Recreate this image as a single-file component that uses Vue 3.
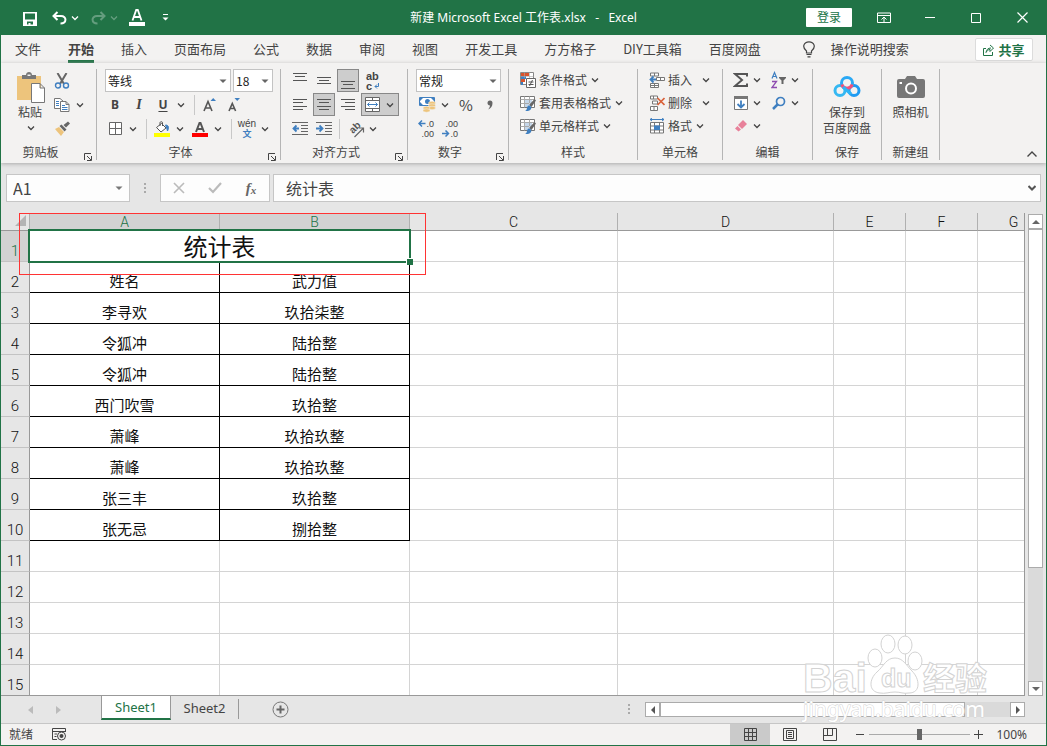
<script setup>
import { ref } from 'vue'

const tabs = ['文件', '开始', '插入', '页面布局', '公式', '数据', '审阅', '视图', '开发工具', '方方格子', 'DIY工具箱', '百度网盘']
const activeTab = ref('开始')

const columns = [
  { name: 'A', width: 190 },
  { name: 'B', width: 190 },
  { name: 'C', width: 208 },
  { name: 'D', width: 216 },
  { name: 'E', width: 72 },
  { name: 'F', width: 72 },
  { name: 'G', width: 72 },
]
const records = [
  ['姓名', '武力值'],
  ['李寻欢', '玖拾柒整'],
  ['令狐冲', '陆拾整'],
  ['令狐冲', '陆拾整'],
  ['西门吹雪', '玖拾整'],
  ['萧峰', '玖拾玖整'],
  ['萧峰', '玖拾玖整'],
  ['张三丰', '玖拾整'],
  ['张无忌', '捌拾整'],
]
const rows = Array.from({ length: 14 }, (_, i) => ({ number: i + 2, cells: records[i] || ['', ''], filled: i < records.length }))

const formula = ref('统计表')
const cellName = ref('A1')
const zoom = ref(100)
</script>

<template>
  <div class="window">
    <svg class="defs" aria-hidden="true">
      <symbol id="caret" viewBox="0 0 10 10"><path d="M2 3.5 5 6.5 8 3.5" fill="none" stroke="currentColor" stroke-width="1.3" /></symbol>
      <symbol id="drop" viewBox="0 0 10 10"><path d="M1.500 3.500H8.500L5 7Z" fill="currentColor" /></symbol>
      <symbol id="launch" viewBox="0 0 10 10"><path d="M1.5 8V1.5H8M4 4 8 8M8.5 4V8.5H4" fill="none" stroke="currentColor" /></symbol>
      <symbol id="sheetbrush" viewBox="0 0 16 16">
        <path d="M.5 1.5H14.500V12.5H.5Z" fill="#fff" stroke="#777" />
        <path d="M4 5H12V9H9V12H4Z" fill="#c5d7ea" />
        <path d="M.5 4.500H14.500M.5 8.500H9M4.500 1.500V12.500M9.500 1.500V8" fill="none" stroke="#aaa" />
        <path d="M14.500 4 16 5.500 11.500 12 9 10Z" fill="#666" /><path d="M5 16C8 15 6 11 9 10.500 13 11 12 17 5 16Z" fill="#3f7fc0" />
      </symbol>
    </svg>

    <header class="titlebar">
      <div class="quick">
        <button class="q save" aria-label="保存">
          <svg width="15" height="15" viewBox="0 0 15 15"><path d="M0 0H14V14H0ZM2 1.500V7.500H12V1.500ZM4 9.500V12.500H5.500V11H7.500V12.500H10V9.500Z" fill="#fff" fill-rule="evenodd" /></svg>
        </button>
        <button class="q undo" aria-label="撤消">
          <svg width="15" height="14" viewBox="0 0 15 14"><path d="M5.500 1 1.500 5 5.500 9M2 5H9C15 5 15 12.500 8.500 12.500" fill="none" stroke="#fff" stroke-width="2" /></svg>
          <svg class="caret"><use href="#caret" /></svg>
        </button>
        <button class="q redo" aria-label="恢复">
          <svg width="15" height="14" viewBox="0 0 15 14"><path d="M9.500 1 13.500 5 9.500 9M13 5H6C0 5 0 12.500 6.500 12.500" fill="none" stroke="#fff" stroke-width="2" /></svg>
          <svg class="caret"><use href="#caret" /></svg>
        </button>
        <button class="q color" aria-label="字体颜色">
          <svg width="16" height="17" viewBox="0 0 16 17"><path d="M3.500 11.500 7.200 1H8.800L12.500 11.500M5 8H11" fill="none" stroke="#fff" stroke-width="1.800" /><path d="M0 13H16V17H0Z" fill="#fff" /></svg>
        </button>
        <button class="q more" aria-label="自定义快速访问工具栏">
          <svg width="8" height="8" viewBox="0 0 8 8"><path d="M2 0H7V1H2ZM1.500 3.500H7.500L4.500 6.500Z" fill="#fff" /></svg>
        </button>
      </div>
      <h1>新建 Microsoft Excel 工作表.xlsx&nbsp;&nbsp; -&nbsp;&nbsp; Excel</h1>
      <div class="controls">
        <button class="login">登录</button>
        <button class="win" aria-label="功能区显示选项"><svg width="14" height="12" viewBox="0 0 14 12"><path d="M.500 1H13.500V10.500H.500ZM.500 3.500H13.500M7 10V5.500M4.500 7.500 7 5 9.500 7.500" fill="none" stroke="#fff" /></svg></button>
        <button class="win" aria-label="最小化"><svg width="10" height="10" viewBox="0 0 10 10"><path d="M0 4.500H10" stroke="#fff" /></svg></button>
        <button class="win" aria-label="最大化"><svg width="10" height="10" viewBox="0 0 10 10"><path d="M.500.500H9.500V9.500H.500Z" fill="none" stroke="#fff" /></svg></button>
        <button class="win" aria-label="关闭"><svg width="11" height="11" viewBox="0 0 11 11"><path d="M.500.500 10.500 10.500M10.500.500.500 10.500" stroke="#fff" stroke-width="1.200" /></svg></button>
      </div>
    </header>

    <nav class="tabs">
      <button v-for="t in tabs" :key="t" class="tab" :class="{ on: t === activeTab }" @click="activeTab = t">{{ t }}</button>
      <button class="tell">
        <svg width="12" height="17" viewBox="0 0 12 17"><path d="M3.500 12V10C-1.500 6 1 .800 6 .800S13.500 6 8.500 10V12ZM3.500 13.500H8.500M4.500 15.800H7.500" fill="none" stroke="#444" stroke-width="1.200" /></svg>
        操作说明搜索
      </button>
      <button class="share">
        <svg width="12" height="12" viewBox="0 0 12 12"><path d="M3 4.500H.500V11.500H9.500V8M3 8.500C3.500 5.500 5 4 8 4M7 1 10.500 4 7 7.500V5.500C5 5.500 4 7 3 8.500" fill="none" stroke="#217346" /></svg>
        共享
      </button>
    </nav>

    <section class="ribbon">
      <div class="group clip">
        <div class="body">
          <button class="paste">
            <svg width="30" height="32" viewBox="0 0 30 32"><path d="M1 4H25V28H1Z" fill="#edc47c" /><path d="M6 3H10C10-1 16-1 16 3H20V7H6Z" fill="#777" /><path d="M11.500 2.500H14.500V4H11.500Z" fill="#f3f2f1" /><path d="M15.500 11.500H24L28.500 16V30.500H15.500ZM24 11.500V16H28.500" fill="#fff" stroke="#777" /></svg>
            <span>粘贴</span>
            <svg class="caret"><use href="#caret" /></svg>
          </button>
          <div class="rows">
            <div class="row">
              <button class="ib" aria-label="剪切"><svg width="16" height="16" viewBox="0 0 16 16"><path d="M3.500 0 10 11M12.500 0 6 11" stroke="#666" stroke-width="2" /><circle cx="4" cy="12.500" r="2.500" fill="none" stroke="#3f7fc0" stroke-width="1.400" /><circle cx="12" cy="12.500" r="2.500" fill="none" stroke="#3f7fc0" stroke-width="1.400" /></svg></button>
            </div>
            <div class="row">
              <button class="ib" aria-label="复制"><svg width="16" height="16" viewBox="0 0 16 16"><path d="M.500 1.500H6L9 4V11.500H.500Z" fill="#fff" stroke="#777" /><path d="M2 4.500H5M2 6.500H5M2 8.500H5" stroke="#3f7fc0" /><path d="M6.500 4.500H12L15 7.500V14.500H6.500ZM12 4.500V7.500H15" fill="#fff" stroke="#777" /><path d="M8 8.500H11M8 10.500H13.500M8 12.500H13.500" stroke="#3f7fc0" /></svg></button>
              <button class="cb" aria-label="复制选项"><svg class="caret"><use href="#caret" /></svg></button>
            </div>
            <div class="row">
              <button class="ib" aria-label="格式刷"><svg width="16" height="16" viewBox="0 0 16 16"><path d="M1 8 5 6 10 11 7 15Z" fill="#edc47c" /><path d="M5.500 5 7.500 3.500 12.500 8.500 10.500 10.500ZM9.500 4 14 .500 16 2.500 12 6.500Z" fill="#666" /></svg></button>
            </div>
          </div>
        </div>
        <div class="label"><span>剪贴板</span><button class="launch" aria-label="剪贴板设置"><svg width="10" height="10"><use href="#launch" /></svg></button></div>
      </div>

      <div class="group font">
        <div class="body rows">
          <div class="row combos">
            <label class="combo wide"><select aria-label="字体"><option>等线</option></select><svg class="caret"><use href="#drop" /></svg></label>
            <label class="combo narrow"><select aria-label="字号"><option>18</option></select><svg class="caret"><use href="#drop" /></svg></label>
          </div>
          <div class="row">
            <button class="ib b">B</button>
            <button class="ib i">I</button>
            <button class="ib u">U</button>
            <button class="cb" aria-label="下划线选项"><svg class="caret"><use href="#caret" /></svg></button>
            <i class="sep"></i>
            <button class="ib" aria-label="增大字号"><svg width="16" height="16" viewBox="0 0 16 16"><path d="M2 14 6 4.500 10 14M3.500 11H8.500" fill="none" stroke="#555" stroke-width="1.600" /><path d="M8.500 4H14L11.200 1Z" fill="#3f7fc0" /></svg></button>
            <button class="ib" aria-label="减小字号"><svg width="16" height="16" viewBox="0 0 16 16"><path d="M3 14 6.300 6.500 9.600 14M4.500 11.500H8.500" fill="none" stroke="#555" stroke-width="1.600" /><path d="M8.500 1H14L11.200 4Z" fill="#3f7fc0" /></svg></button>
          </div>
          <div class="row">
            <button class="ib" aria-label="边框"><svg width="13" height="13" viewBox="0 0 13 13"><path d="M.500.500H12.500V12.500H.500ZM6.500.500V12.500M.500 6.500H12.500" fill="#fff" stroke="#666" /></svg></button>
            <button class="cb" aria-label="边框选项"><svg class="caret"><use href="#caret" /></svg></button>
            <i class="sep"></i>
            <button class="ib" aria-label="填充颜色"><svg width="16" height="16" viewBox="0 0 16 16"><path d="M2.500 6.500 7.500 2.500 12 7 7 11Z" fill="#fff" stroke="#555" /><path d="M6 5V1.500C6 .500 8.500.500 8.500 1.500V5" fill="none" stroke="#555" /><path d="M11.500 4C15 4 15 7 13.500 10 13 8 12.500 6 11.500 4Z" fill="#3f7fc0" stroke="#3f7fc0" /><path d="M0 12H16V16H0Z" fill="#ff0" /></svg></button>
            <button class="cb" aria-label="填充颜色选项"><svg class="caret"><use href="#caret" /></svg></button>
            <button class="ib gap" aria-label="字体颜色"><svg width="16" height="16" viewBox="0 0 16 16"><path d="M4 11 7.500 2H8.500L12 11M5 8H11" fill="none" stroke="#555" stroke-width="2" /><path d="M0 12H16V16H0Z" fill="red" /></svg></button>
            <button class="cb" aria-label="字体颜色选项"><svg class="caret"><use href="#caret" /></svg></button>
            <i class="sep"></i>
            <button class="ib pinyin"><span>wén</span><b>文</b></button>
            <button class="cb" aria-label="拼音选项"><svg class="caret"><use href="#caret" /></svg></button>
          </div>
        </div>
        <div class="label"><span>字体</span><button class="launch" aria-label="字体设置"><svg width="10" height="10"><use href="#launch" /></svg></button></div>
      </div>

      <div class="group align">
        <div class="body rows">
          <div class="row">
            <button class="ib" aria-label="顶端对齐"><svg width="14" height="16" viewBox="0 0 14 16"><path d="M0 .500H14M2 3.500H12M0 7.500H14" stroke="#555" /></svg></button>
            <button class="ib" aria-label="垂直居中"><svg width="14" height="16" viewBox="0 0 14 16"><path d="M0 4.500H14M2 7.500H12M0 10.500H14" stroke="#555" /></svg></button>
            <button class="ib on" aria-label="底端对齐"><svg width="14" height="16" viewBox="0 0 14 16"><path d="M0 8.500H14M2 11.500H12M0 15.500H14" stroke="#555" /></svg></button>
            <button class="ib wrap" aria-label="自动换行"><span>ab</span><span>c<svg width="5" height="6" viewBox="0 0 5 6"><path d="M4.500 0V3.500H1M3 1.500 1 3.500 3 5.500" fill="none" stroke="#3f7fc0" /></svg></span></button>
          </div>
          <div class="row">
            <button class="ib" aria-label="左对齐"><svg width="14" height="12" viewBox="0 0 14 12"><path d="M0 .500H14M0 3.500H10M0 7.500H14M0 10.500H10" stroke="#555" /></svg></button>
            <button class="ib on" aria-label="居中"><svg width="14" height="12" viewBox="0 0 14 12"><path d="M0 .500H14M2 3.500H12M0 7.500H14M2 10.500H12" stroke="#555" /></svg></button>
            <button class="ib" aria-label="右对齐"><svg width="14" height="12" viewBox="0 0 14 12"><path d="M0 .500H14M4 3.500H14M0 7.500H14M4 10.500H14" stroke="#555" /></svg></button>
            <button class="ib on merge" aria-label="合并后居中"><svg width="15" height="15" viewBox="0 0 15 15"><path d="M.500.500H14.500V14.500H.500ZM.500 3.500H14.500M.500 11.500H14.500M7.500.500V3.500M7.500 11.500V14.500" fill="#fff" stroke="#666" /><path d="M2.500 7.500H12.500M4.500 5.500 2.500 7.500 4.500 9.500M10.500 5.500 12.500 7.500 10.500 9.500" fill="none" stroke="#3f7fc0" /></svg><svg class="caret"><use href="#caret" /></svg></button>
          </div>
          <div class="row">
            <button class="ib" aria-label="减少缩进量"><svg width="16" height="13" viewBox="0 0 16 13"><path d="M0 .500H16M9 3.500H16M9 6.500H16M9 9.500H16M0 12.500H16" stroke="#666" /><path d="M7 6.500H1.500M4.500 3.500 1.500 6.500 4.500 9.500" fill="none" stroke="#3f7fc0" stroke-width="1.800" /></svg></button>
            <button class="ib" aria-label="增加缩进量"><svg width="16" height="13" viewBox="0 0 16 13"><path d="M0 .500H16M9 3.500H16M9 6.500H16M9 9.500H16M0 12.500H16" stroke="#666" /><path d="M0 6.500H6M3.500 3.500 6.500 6.500 3.500 9.500" fill="none" stroke="#3f7fc0" stroke-width="1.800" /></svg></button>
            <i class="sep short"></i>
            <button class="ib turn" aria-label="方向"><svg width="20" height="20" viewBox="0 0 20 20"><text x="0" y="0" transform="translate(8 15) rotate(-45)" fill="#555">ab</text><path d="M9.500 18 18 9.500M14 9H18.500V13.500" fill="none" stroke="#666" stroke-width="1.200" /></svg></button>
            <button class="cb" aria-label="方向选项"><svg class="caret"><use href="#caret" /></svg></button>
          </div>
        </div>
        <div class="label"><span>对齐方式</span><button class="launch" aria-label="对齐设置"><svg width="10" height="10"><use href="#launch" /></svg></button></div>
      </div>

      <div class="group number">
        <div class="body rows">
          <div class="row">
            <label class="combo full"><select aria-label="数字格式"><option>常规</option></select><svg class="caret"><use href="#drop" /></svg></label>
          </div>
          <div class="row">
            <button class="ib" aria-label="会计数字格式"><svg width="17" height="16" viewBox="0 0 17 16"><path d="M.500.500H15.500V8.500H.500Z" fill="#fff" stroke="#3f7fc0" /><path d="M1 1H4L1 4ZM15 1H12L15 4ZM1 8H4L1 5ZM6 4.500A2.500 2.500 0 0 1 11 4.500 2.500 2.500 0 0 1 6 4.500" fill="#3f7fc0" /><g fill="#edc47c" stroke="#f3f2f1" stroke-width=".500"><ellipse cx="13" cy="6" rx="3.500" ry="1.700" /><ellipse cx="13" cy="8.500" rx="3.500" ry="1.700" /><ellipse cx="13" cy="11" rx="3.500" ry="1.700" /><ellipse cx="7.500" cy="11" rx="3.500" ry="1.700" /><ellipse cx="7.500" cy="13.500" rx="3.500" ry="1.700" /></g></svg></button>
            <button class="cb" aria-label="会计格式选项"><svg class="caret"><use href="#caret" /></svg></button>
            <button class="ib pct">%</button>
            <button class="ib" aria-label="千位分隔样式"><svg width="6" height="10" viewBox="0 0 6 10"><path d="M.500 3A2.500 2.500 0 0 1 5.500 3C5.500 6 4 8.500 1 9.500 2.500 8 3 6.500 3 5.500 1.500 5.500.500 4.500.500 3Z" fill="#666" /></svg></button>
          </div>
          <div class="row">
            <button class="ib dec"><span><svg width="8" height="7" viewBox="0 0 8 7"><path d="M7.500 3.500H1M4 .500 1 3.500 4 6.500" fill="none" stroke="#3f7fc0" stroke-width="1.500" /></svg>.0</span><span>.00</span></button>
            <button class="ib dec"><span>.00</span><span><svg width="8" height="7" viewBox="0 0 8 7"><path d="M0 3.500H6.500M3.500.500 6.500 3.500 3.500 6.500" fill="none" stroke="#3f7fc0" stroke-width="1.500" /></svg>.0</span></button>
          </div>
        </div>
        <div class="label"><span>数字</span><button class="launch" aria-label="数字设置"><svg width="10" height="10"><use href="#launch" /></svg></button></div>
      </div>

      <div class="group styles">
        <div class="body list">
          <button class="tb"><svg width="16" height="16" viewBox="0 0 16 16"><path d="M.500.500H13.500V12.500H.500Z" fill="#fff" stroke="#888" /><path d="M1 1H9V4H1ZM1 7H5V10H1Z" fill="#d9532c" /><path d="M1 4H6V7H1ZM1 10H3V13H1Z" fill="#3f7fc0" /><path d="M.500 4.500H13.500M4.500.500V6M9.500.500V6" stroke="#aaa" stroke-width=".600" /><path d="M6.500 6.500H15.500V15.500H6.500Z" fill="#fff" stroke="#666" /><path d="M8.500 10H13.500M8.500 12.500H13.500M12.500 8 9.500 14" stroke="#555" /></svg>条件格式<svg class="caret"><use href="#caret" /></svg></button>
          <button class="tb"><svg width="16" height="16"><use href="#sheetbrush" /></svg>套用表格格式<svg class="caret"><use href="#caret" /></svg></button>
          <button class="tb"><svg width="16" height="16"><use href="#sheetbrush" /></svg>单元格样式<svg class="caret"><use href="#caret" /></svg></button>
        </div>
        <div class="label"><span>样式</span></div>
      </div>

      <div class="group cells">
        <div class="body list">
          <button class="tb far"><svg width="16" height="16" viewBox="0 0 16 16"><path d="M1.500 1H9.500V4H1.500ZM5.500 1V4M1.500 11.500H9.500V15.500H1.500ZM1.500 13.500H9.500M5.500 11.500V15.500M7.500 5.500H15.500V8.500H7.500ZM11.500 5.500V8.500" fill="#fff" stroke="#777" /><path d="M7 7.500H1.500M4.500 4.500 1.500 7.500 4.500 10.500" fill="none" stroke="#3f7fc0" stroke-width="1.800" /></svg>插入<svg class="caret"><use href="#caret" /></svg></button>
          <button class="tb far"><svg width="16" height="16" viewBox="0 0 16 16"><path d="M1.500 1H8.500V4H1.500ZM4.500 1V4M1.500 11.500H8.500V15.500H1.500ZM5 11.500V15.500M3.500 6H8.500V9H3.500Z" fill="#fff" stroke="#777" /><path d="M8.500 3 15.500 10M15.500 3 8.500 10" stroke="#d9623a" stroke-width="1.700" /></svg>删除<svg class="caret"><use href="#caret" /></svg></button>
          <button class="tb"><svg width="16" height="16" viewBox="0 0 16 16"><path d="M1 1.500H15M3 0 1 1.500 3 3M13 0 15 1.500 13 3" fill="none" stroke="#3f7fc0" /><path d="M1.500 4.500H14.500V15H1.500ZM5.500 4.500V15M10.500 4.500V15M1.500 8H14.500M1.500 12H14.500" fill="#fff" stroke="#777" /><path d="M5 7.500H11V12H5Z" fill="#3f7fc0" /></svg>格式<svg class="caret"><use href="#caret" /></svg></button>
        </div>
        <div class="label"><span>单元格</span></div>
      </div>

      <div class="group edit">
        <div class="body list">
          <div class="pair">
            <button class="tb" aria-label="自动求和"><svg width="16" height="16" viewBox="0 0 16 16"><path d="M14 4.500V2H2L9 8 2 14H14V11.500" fill="none" stroke="#555" stroke-width="2" /></svg><svg class="caret"><use href="#caret" /></svg></button>
            <button class="tb" aria-label="排序和筛选"><svg width="16" height="18" viewBox="0 0 16 18"><path d="M1 7.500 3.500 1.500 6 7.500M2 5.500H5" fill="none" stroke="#3f7fc0" stroke-width="1.200" /><path d="M1 10.500H5.500L1 16.500H6" fill="none" stroke="#8e4bb0" stroke-width="1.300" /><path d="M8 6H15V7L12.500 9.500V13H10.500V9.500L8 7Z" fill="#666" /></svg><svg class="caret"><use href="#caret" /></svg></button>
          </div>
          <div class="pair">
            <button class="tb" aria-label="填充"><svg width="16" height="16" viewBox="0 0 16 16"><path d="M1.500 1.500H14.500V14.500H1.500Z" fill="#fff" stroke="#777" /><path d="M1 1H15V4H1Z" fill="#777" /><path d="M8 5.500V12M4.500 9 8 12.500 11.500 9" fill="none" stroke="#3f7fc0" stroke-width="1.800" /></svg><svg class="caret"><use href="#caret" /></svg></button>
            <button class="tb" aria-label="查找和选择"><svg width="16" height="16" viewBox="0 0 16 16"><circle cx="9.500" cy="6.500" r="4" fill="none" stroke="#3f7fc0" stroke-width="1.700" /><path d="M6.500 9.500 2 14" stroke="#3f7fc0" stroke-width="2.500" /></svg><svg class="caret"><use href="#caret" /></svg></button>
          </div>
          <div class="pair">
            <button class="tb" aria-label="清除"><svg width="16" height="16" viewBox="0 0 16 16"><path d="M10 2 14 6 9 11 5 7Z" fill="#e8819a" /><path d="M4.500 8 8 11.500 5.500 13.500 2 10.500Z" fill="#e8819a" /></svg><svg class="caret"><use href="#caret" /></svg></button>
          </div>
        </div>
        <div class="label"><span>编辑</span></div>
      </div>

      <div class="group pan">
        <div class="body">
          <button class="big">
            <svg width="28" height="30" viewBox="0 0 28 30"><g fill="none" stroke-width="3"><circle cx="7" cy="18.500" r="5" stroke="#35b8f2" /><circle cx="21" cy="18.500" r="5" stroke="#1f9bf2" /><circle cx="14" cy="11" r="5.500" stroke="#2aa9f5" /><path d="M8.800 12.500A5.500 5.500 0 0 0 19.200 12.500" stroke="#f5507a" /><path d="M10 15 18 22" stroke="#2eb4f5" stroke-width="3" /></g></svg>
            <span>保存到</span><span>百度网盘</span>
          </button>
        </div>
        <div class="label"><span>保存</span></div>
      </div>

      <div class="group cam">
        <div class="body">
          <button class="big">
            <svg width="28" height="30" viewBox="0 0 28 30"><path d="M2 7H8L10 4H18L20 7H26Q28 7 28 9V24Q28 26 26 26H2Q0 26 0 24V9Q0 7 2 7Z" fill="#777" /><circle cx="14" cy="16.500" r="5" fill="none" stroke="#fff" stroke-width="2" /><path d="M2.500 10H5V12H2.500Z" fill="#fff" /></svg>
            <span>照相机</span>
          </button>
        </div>
        <div class="label"><span>新建组</span></div>
      </div>
      <button class="collapse" aria-label="折叠功能区"><svg width="10" height="6" viewBox="0 0 10 6"><path d="M.500 5.500 5 1 9.500 5.500" fill="none" stroke="#444" stroke-width="1.400" /></svg></button>
    </section>

    <section class="formulabar">
      <div class="namebox"><input v-model="cellName" aria-label="名称框"><button class="cb" aria-label="名称列表"><svg class="caret"><use href="#drop" /></svg></button></div>
      <svg class="dots" width="3" height="11" viewBox="0 0 3 11"><path d="M0 0H2V2H0ZM0 4H2V6H0ZM0 8H2V10H0Z" fill="#aaa" /></svg>
      <div class="fx">
        <button aria-label="取消"><svg width="12" height="12" viewBox="0 0 12 12"><path d="M1 1 11 11M11 1 1 11" stroke="#bbb" stroke-width="1.600" /></svg></button>
        <button aria-label="输入"><svg width="14" height="12" viewBox="0 0 14 12"><path d="M1 6 5 10 13 1" fill="none" stroke="#bbb" stroke-width="2.200" /></svg></button>
        <button class="fn">f<small>x</small></button>
      </div>
      <div class="formula"><input v-model="formula" aria-label="编辑栏"><button class="cb" aria-label="展开编辑栏"><svg width="8" height="6" viewBox="0 0 8 6"><path d="M.500 1 4 4.500 7.500 1" fill="none" stroke="#555" stroke-width="2" /></svg></button></div>
    </section>

    <main class="work">
      <div class="grid">
        <table>
          <colgroup><col :style="{ width: '29px' }"><col v-for="c in columns" :key="c.name" :style="{ width: c.width + 'px' }"></colgroup>
          <thead>
            <tr>
              <th class="corner"><svg width="11" height="11" viewBox="0 0 11 11"><path d="M11 0V11H0Z" fill="#b4b4b4" /></svg></th>
              <th v-for="(c, i) in columns" :key="c.name" :class="{ sel: i < 2 }">{{ c.name }}</th>
            </tr>
          </thead>
          <tbody>
            <tr>
              <th class="sel">1</th>
              <td colspan="2" class="heading">统计表</td>
              <td v-for="n in 5" :key="n"></td>
            </tr>
            <tr v-for="r in rows" :key="r.number">
              <th>{{ r.number }}</th>
              <td v-for="(v, i) in r.cells" :key="i" :class="{ data: r.filled }">{{ v }}</td>
              <td v-for="n in 5" :key="'e' + n"></td>
            </tr>
          </tbody>
        </table>
        <div class="selection"></div>
        <div class="mark"></div>
      </div>
      <div class="vscroll">
        <button aria-label="向上滚动"><svg width="8" height="4" viewBox="0 0 8 4"><path d="M0 4H8L4 0Z" fill="#666" /></svg></button>
        <div class="vtrack"><div class="vthumb"></div></div>
        <button aria-label="向下滚动"><svg width="8" height="4" viewBox="0 0 8 4"><path d="M0 0H8L4 4Z" fill="#666" /></svg></button>
      </div>
    </main>

    <div class="sheets">
      <div class="nav">
        <button aria-label="上一张"><svg width="5" height="8" viewBox="0 0 5 8"><path d="M5 0V8L0 4Z" fill="#bbb" /></svg></button>
        <button aria-label="下一张"><svg width="5" height="8" viewBox="0 0 5 8"><path d="M0 0V8L5 4Z" fill="#bbb" /></svg></button>
      </div>
      <button class="sheet on">Sheet1</button>
      <button class="sheet">Sheet2</button>
      <i class="bar"></i>
      <button class="add" aria-label="新工作表"><svg width="17" height="17" viewBox="0 0 17 17"><circle cx="8.500" cy="8.500" r="7.500" fill="none" stroke="#777" /><path d="M4.500 8.500H12.500M8.500 4.500V12.500" stroke="#666" stroke-width="2" /></svg></button>
      <svg class="grip" width="3" height="11" viewBox="0 0 3 11"><path d="M0 0H2V2H0ZM0 4H2V6H0ZM0 8H2V10H0Z" fill="#aaa" /></svg>
      <div class="hscroll">
        <button aria-label="向左滚动"><svg width="4" height="8" viewBox="0 0 4 8"><path d="M4 0V8L0 4Z" fill="#555" /></svg></button>
        <div class="htrack"><div class="hthumb"></div></div>
        <button aria-label="向右滚动"><svg width="4" height="8" viewBox="0 0 4 8"><path d="M0 0V8L4 4Z" fill="#555" /></svg></button>
      </div>
    </div>

    <footer class="status">
      <span class="ready">就绪</span>
      <button class="macro" aria-label="录制宏"><svg width="15" height="13" viewBox="0 0 15 13"><path d="M5 11.500H.500V.500H13.500V4M.500 3.500H13.500M2.500 6H5M2.500 8.500H4.500" fill="none" stroke="#444" /><circle cx="9.500" cy="8" r="4" fill="#f3f2f1" stroke="#444" /><circle cx="9.500" cy="8" r="2" fill="#444" /></svg></button>
      <div class="views">
        <button class="on" aria-label="普通"><svg width="13" height="13" viewBox="0 0 13 13"><path d="M.500.500H12.500V12.500H.500ZM4.500.500V12.500M8.500.500V12.500M.500 4.500H12.500M.500 8.500H12.500" fill="none" stroke="#444" /></svg></button>
        <button aria-label="页面布局"><svg width="14" height="13" viewBox="0 0 14 13"><path d="M.500.500H13.500V12.500H.500ZM3.500 2.500H10.500V10.500H3.500ZM5 4.500H9M5 6.500H9M5 8.500H9" fill="none" stroke="#444" /></svg></button>
        <button aria-label="分页预览"><svg width="14" height="13" viewBox="0 0 14 13"><path d="M.500.500H13.500V12.500H.500ZM4.500.500V7.500M9.500.500V7.500M.500 7.500H9.500" fill="none" stroke="#444" /></svg></button>
      </div>
      <button class="zb" aria-label="缩小"><svg width="9" height="9" viewBox="0 0 9 9"><path d="M0 4.500H8" stroke="#444" /></svg></button>
      <input v-model="zoom" class="slider" type="range" min="0" max="200" aria-label="显示比例">
      <button class="zb" aria-label="放大"><svg width="9" height="9" viewBox="0 0 9 9"><path d="M0 4.500H9M4.500 0V9" stroke="#444" /></svg></button>
      <span class="percent">100%</span>
    </footer>

    <svg class="logo" width="196" height="96" viewBox="0 0 196 96">
      <g class="paw"><ellipse cx="80" cy="31" rx="7" ry="9" /><ellipse cx="93" cy="17" rx="7" ry="9" /><ellipse cx="110" cy="18" rx="7" ry="9" /><ellipse cx="120" cy="34" rx="7" ry="9" /><path d="M100 31C108 31 111 38 117 44 125 52 126 66 114 66 108 67 106 65 100 65S90 67 85 66C73 65 74 52 82 45 89 39 91 31 100 31Z" /></g>
      <text class="word" x="8" y="65">Bai</text>
      <text class="du" x="86" y="60">du</text>
      <text class="cn" x="128" y="63">经验</text>
      <text class="site" x="8" y="90">jingyan.baidu.com</text>
    </svg>
  </div>
</template>

<style>
body { margin: 0; }
</style>

<style scoped>
* { box-sizing: border-box; }
.window { position: relative; display: flex; flex-direction: column; height: 100vh; overflow: hidden; border: 1px solid #217346; border-top: 0; background: #e6e6e6; color: #444; font: 12px/16px "Noto Sans", "Noto Sans CJK SC", sans-serif; }
.defs { position: absolute; width: 0; height: 0; }
button { display: flex; align-items: center; justify-content: center; margin: 0; padding: 0; border: 0; background: none; color: inherit; font: inherit; white-space: nowrap; }
input, select { font: inherit; color: inherit; margin: 0; padding: 0; border: 0; background: none; appearance: none; outline: 0; min-width: 0; }
svg { display: block; flex: none; }
.caret { width: 10px; height: 10px; }

.titlebar { display: grid; grid-template-columns: 1fr auto 1fr; align-items: center; height: 35px; background: #217346; color: #fff; flex: none; }
.titlebar h1 { margin: 0; font-size: 12px; font-weight: 400; }
.quick { display: flex; align-items: center; padding-left: 22px; }
.save { margin-top: 3px; }
.undo { margin-left: 14px; gap: 3px; }
.redo { margin-left: 11px; gap: 3px; opacity: .3; }
.color { margin-left: 10px; }
.more { margin-left: 16px; }
.controls { display: flex; justify-content: flex-end; align-items: center; padding-right: 1px; }
.login { width: 46px; height: 19px; margin-right: 9px; border-radius: 1px; background: #fff; color: #217346; }
.win { width: 46px; height: 35px; }

.tabs { display: flex; height: 28px; gap: 27px; padding: 0 13px 0 14px; background: #f3f2f1; flex: none; font-family: "Noto Sans CJK SC", sans-serif; font-size: 13px; }
.tab.on { font-weight: 700; box-shadow: inset 0 -3px #217346; }
.tell { gap: 16px; margin-left: 15px; }
.share { gap: 3px; width: 58px; height: 23px; margin: 3px 0 0 auto; border: 1px solid #dcdcdc; border-radius: 2px; background: #fff; color: #217346; font-weight: 700; }

.ribbon { position: relative; z-index: 1; display: flex; padding: 6px 0 3px; background: #f3f2f1; box-shadow: 0 1px 4px #aaa; flex: none; }
.group { display: flex; flex-direction: column; justify-content: space-between; height: 91px; border-right: 1px solid #b5b5b5; font-family: "Noto Sans CJK SC", sans-serif; }
.body { display: flex; }
.rows { display: flex; flex-direction: column; gap: 1px; }
.row { display: flex; align-items: center; gap: 2px; height: 23px; }
.label { display: flex; align-items: center; height: 16px; }
.label span { flex: 1; text-align: center; }
.launch { width: 16px; height: 20px; align-items: flex-end; }
.ib { width: 22px; height: 23px; flex: none; }
.ib.on { border: 1px solid #888; background: #cdcdcd; }
.cb { width: 10px; height: 20px; flex: none; }
.sep { width: 1px; height: 20px; margin: 0 2px 0 6px; background: #c8c8c8; }
.short { margin-left: 2px; }
.gap { margin-left: 2px; }
.clip { width: 96px; }
.clip .body { padding-left: 15px; gap: 5px; }
.paste { flex-direction: column; justify-content: flex-start; width: 30px; padding-top: 3px; }
.paste span { padding-right: 2px; }
.paste .caret { margin-top: 3px; }
.font { width: 184px; }
.font .body { padding-left: 7px; }
.combos { padding-left: 1px; }
.combo { display: flex; align-items: center; height: 23px; padding: 0 2px; border: 1px solid #c3c3c3; background: #fff; color: #222; }
.combo select { flex: 1; }
.combo .caret { color: #666; }
.wide { width: 126px; }
.narrow { width: 40px; }
.full { width: 85px; }
.b, .u, .i { font-family: "Noto Sans", sans-serif; font-weight: 700; }
.i { font-family: "Liberation Serif", serif; font-style: italic; font-size: 14px; }
.u { text-decoration: underline; text-underline-offset: 2px; }
.pinyin { flex-direction: column; font-family: "Liberation Sans", "Noto Sans CJK SC", sans-serif; font-size: 10px; line-height: 11px; }
.pinyin b { color: #3f7fc0; font-size: 9px; }
.align { width: 127px; }
.align .body { padding-left: 8px; }
.wrap { flex-direction: column; align-items: flex-start; padding-left: 5px; font-family: "Liberation Sans", sans-serif; font-size: 11px; font-weight: 700; line-height: 10px; }
.wrap span { display: flex; align-items: center; gap: 2px; }
.ib.merge { width: 38px; gap: 5px; }
.turn svg { overflow: visible; }
.turn text { font: 700 10px "Liberation Sans", sans-serif; }
.number { width: 101px; }
.number .body { padding-left: 8px; }
.pct { margin-left: 3px; font-size: 15px; }
.dec { flex-direction: column; align-items: flex-end; padding-right: 4px; font-family: "Liberation Sans", sans-serif; font-size: 9px; line-height: 10px; }
.dec span { display: flex; align-items: center; }
.list { flex-direction: column; gap: 2px; align-items: flex-start; }
.tb { height: 21px; gap: 3px; }
.styles { width: 129px; }
.styles .body { padding-left: 11px; }
.cells { width: 85px; }
.cells .body { padding-left: 11px; }
.far .caret { margin-left: 6px; }
.edit { width: 90px; }
.edit .body { padding-left: 10px; }
.pair { display: flex; gap: 9px; }
.pan { width: 69px; }
.cam { width: 58px; }
.big { flex-direction: column; justify-content: flex-start; width: 100%; padding-top: 3px; }
.big svg { margin-bottom: 2px; }
.collapse { width: 20px; height: 12px; margin: auto 4px 0 auto; }

.formulabar { display: flex; align-items: center; height: 50px; padding: 0 5px; flex: none; font-family: "Noto Sans CJK SC", sans-serif; font-size: 16px; line-height: 20px; }
.namebox, .fx, .formula { display: flex; align-items: center; height: 28px; border: 1px solid #c6c6c6; background: #fdfdfd; }
.namebox { width: 124px; padding: 0 5px 0 6px; }
.namebox input, .formula input { flex: 1; width: 0; }
.namebox .caret { color: #777; }
.dots { margin: 0 13px 0 14px; }
.fx { width: 110px; margin-right: 3px; justify-content: space-around; }
.fx button { width: 36px; }
.fn { font: italic 700 15px/20px "Liberation Serif", serif; color: #666; }
.fn small { font-size: 11px; line-height: 14px; padding-top: 4px; }
.formula { flex: 1; padding: 0 3px 0 12px; }

.work { display: flex; flex: 1; min-height: 0; }
.grid { position: relative; flex: 1; min-width: 0; overflow: hidden; border-right: 1px solid #999; border-bottom: 1px solid #999; background: #fff; }
table { width: 1049px; table-layout: fixed; border-collapse: separate; border-spacing: 0; font-family: "Noto Sans CJK SC", sans-serif; font-size: 15px; line-height: 20px; color: #111; }
th, td { height: 31px; padding: 0 0 1px; border-right: 1px solid #d4d4d4; border-bottom: 1px solid #d4d4d4; text-align: center; vertical-align: bottom; font-weight: 400; white-space: nowrap; }
th { padding: 0; background: #e6e6e6; border-right-color: #999; border-bottom-color: #c3c3c3; font-family: Roboto, sans-serif; font-weight: 300; }
thead th { height: 18px; padding: 1px 0 0; border-color: #b0b0b0 #b0b0b0 #999; line-height: 16px; font-size: 14px; }
thead .corner svg { margin: 0 0 4px 14px; }
th.sel { background: #d2d2d2; color: #217346; }
.heading { font-size: 24px; line-height: 28px; }
.data { border-color: #000; }
.selection { position: absolute; left: 27px; top: 16px; width: 383px; height: 34px; border: 2px solid #217346; }
.selection::after { content: ""; position: absolute; right: -4px; bottom: -4px; width: 6px; height: 6px; border: 1px solid #fff; border-width: 1px 0 0 1px; background: #217346; }
.mark { position: absolute; left: 18px; top: 0; width: 407px; height: 62px; border: 1px solid #f33; }
.vscroll { display: flex; flex-direction: column; width: 15px; margin: 1px 3px 0; }
.vscroll button, .hscroll button { width: 15px; height: 15px; border: 1px solid #ababab; background: #fff; flex: none; }
.vtrack { flex: 1; background: #dadada; }
.vthumb { height: 75%; border: 1px solid #ababab; background: #fff; }

.sheets { display: flex; align-items: center; height: 28px; border-bottom: 1px solid #c6c6c6; flex: none; font-size: 13px; }
.nav { display: flex; gap: 23px; width: 100px; padding-left: 27px; }
.sheet { width: 67px; height: 24px; align-self: flex-start; }
.sheet.on { width: 70px; margin-top: -1px; height: 25px; border: 1px solid #999; border-width: 0 1px 2px; border-bottom-color: #217346; background: #fff; color: #217346; }
.bar { width: 1px; height: 20px; background: #999; margin-bottom: 2px; }
.add { margin-left: 33px; }
.grip { margin-left: auto; }
.hscroll { display: flex; width: 380px; margin: 0 21px 0 14px; }
.htrack { flex: 1; background: #dadada; }
.hthumb { width: 87%; height: 15px; border: 1px solid #ababab; background: #fff; }

.status { display: flex; align-items: center; height: 21px; padding: 0 19px 0 8px; background: #f3f2f1; flex: none; }
.macro { margin-left: 19px; }
.views { display: flex; margin: 0 6px 0 auto; }
.views button { width: 40px; height: 21px; }
.views .on { background: #cacaca; }
.zb { width: 9px; height: 20px; }
.slider { width: 101px; height: 14px; margin: 0 4px; background: linear-gradient(#aaa, #aaa) center / 100% 1px no-repeat; }
.slider::-webkit-slider-thumb { appearance: none; width: 5px; height: 11px; background: #666; }
.percent { margin-left: 13px; }

.logo { position: absolute; right: 55px; bottom: 22px; pointer-events: none; font-family: "Liberation Sans", "Noto Sans CJK SC", sans-serif; font-weight: 700; }
.logo text, .paw { fill: #fff; stroke: #d3d3d3; stroke-width: 1; }
.word { font-size: 41px; }
.logo .du { font-size: 25px; }
.cn { font-size: 32px; }
.logo .site { font: 21px "Noto Sans", sans-serif; paint-order: stroke; }
</style>
